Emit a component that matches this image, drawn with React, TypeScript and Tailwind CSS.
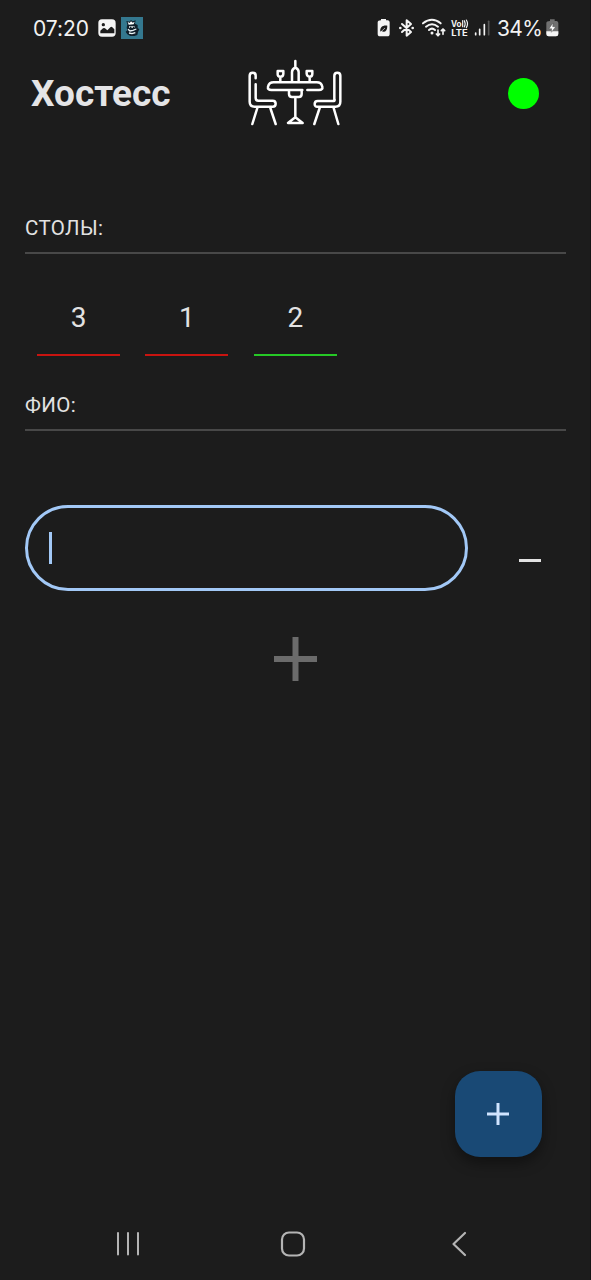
import React from "react";

const stroke = { fill: "none", strokeLinecap: "round", strokeLinejoin: "round" } as const;

function StatusBar() {
  return (
    <div className="flex h-14 w-full items-center justify-between pl-[32px] pr-[31px] text-[#f2f2f2]">
      <div className="flex items-center">
        <span className="w-[66px] whitespace-nowrap pl-px font-['Inter',sans-serif] text-[21px] leading-none tracking-[-0.05px]">07:20</span>
        <svg width="18" height="18" viewBox="0 0 54 54">
          <rect x="1" y="1" width="52" height="52" rx="11" fill="#f4f4f4" />
          <circle cx="16" cy="17" r="5" fill="#1c1c1c" />
          <path d="M7 43V35l8-7q3-2 6 0l7 6 9-9q3-3 6 0l6 6v12z" fill="#1c1c1c" />
        </svg>
        <svg className="ml-[5px]" width="22" height="22" viewBox="0 0 66 66">
          <rect width="66" height="66" fill="#34788f" />
          <path d="M19 22L16 12l9 2 5-5 5 4 9-3-2 10 8 4v9l5 4-4 8-2 9-9 3H28l-9-5-5-8 5-4-2-8z" fill="#101f2b" />
          <path d="M20 15l6 3 4-5 5 4 6-3-3 8-15 1z" fill="#fff" />
          <path d="M24 30h17M21 37l6 5 9-2 10-4M24 48l9 2 10-3" fill="none" stroke="#edf5f8" strokeWidth="4" />
          <path d="M29 29v5M38 29v5" stroke="#101f2b" strokeWidth="4" />
        </svg>
      </div>
      <div className="flex items-center">
        <svg width="120" height="40" viewBox="0 0 360 120">
          <path d="M33 33h15v4h6q5 1 5 6v34q0 8-7 8H30q-7 0-7-8V43q0-6 10-6z" fill="#f4f4f4" />
          <path d="M31 71c-2-14 8-20 21-18 0 16-8 22-18 16z" fill="#1c1c1c" />
          <path d="M31 73l14-13" stroke="#f4f4f4" strokeWidth="2" />
          <path d="M96 48l27 24-13 11V37l13 11-27 24" {...stroke} stroke="#f4f4f4" strokeWidth="6" />
          <g fill="#f4f4f4"><circle cx="91" cy="60" r="4" /><circle cx="128" cy="60" r="4" /></g>
          <g {...stroke} stroke="#f4f4f4" strokeWidth="6">
            <path d="M159 46q27-21 53 0M168 56q18-14 36 0M177 66q9-8 18 0" />
            <path d="M204 66v17m-5-5 5 5 5-5M219 79V63m-5 5 5-5 5 5" strokeWidth="5" />
          </g>
          <circle cx="186" cy="75" r="4.5" fill="#f4f4f4" />
          <text x="243" y="56" textLength="32" lengthAdjust="spacingAndGlyphs" fontFamily="Inter, sans-serif" fontSize="25" fontWeight="700" fill="#f4f4f4">Vo</text>
          <path d="M278 38v18M283 38q5 9 0 19M289 36q7 11 0 23" {...stroke} stroke="#f4f4f4" strokeWidth="3.5" />
          <text x="244" y="83" textLength="49" lengthAdjust="spacingAndGlyphs" fontFamily="Inter, sans-serif" fontSize="25" fontWeight="700" fill="#f4f4f4">LTE</text>
          <g {...stroke} strokeWidth="5" stroke="#f4f4f4">
            <path d="M317 75v5M329 64v16M343 50v30" />
            <path d="M356 40v40" stroke="#555" />
          </g>
        </svg>
        <span className="ml-[7px] w-[48px] whitespace-nowrap font-['Inter',sans-serif] text-[21px] leading-none tracking-[-0.6px]">34%</span>
        <svg width="14" height="18" viewBox="0 0 42 54">
          <path d="M15 1h14v5h6q5 1 5 6v33q0 7-7 7H11q-7 0-7-7V12q0-6 11-6z" fill="#707070" />
          <path d="M4 37h36v8q0 7-7 7H11q-7 0-7-7z" fill="#f5f5f5" />
          <path d="M24 12L12 29h8l-1 11 13-17h-9z" fill="#fff" stroke="#333" strokeWidth="1" />
        </svg>
      </div>
    </div>
  );
}

function DiningTable() {
  return (
    <svg width="110" height="80" viewBox="0 0 330 240">
      <g {...stroke} stroke="#fff" strokeWidth="7.5">
        <path d="M47 79V71q0-9-9-9t-9 9v78q0 15 15 15h54q9 0 9-9t-9-9H55q-8 0-8-8V97" />
        <path d="M284 143q0 4-5 4h-46q-9 0-9 9t9 8h53q15 0 15-15V71q0-9-9-9t-9 9v72" />
        <path d="M52 168L37 216M91 168l16 48M239 168l-16 48M281 168l14 48" />
        <path d="M187 114H94q-12 0-10-10 3-13 17-13h129q14 0 17 13 2 10-10 10h-35" />
        <path d="M147 117v9q0 9 9 9h20q9 0 9-9v-9M166 137v59M166 196l-22 17h44z" />
        <path d="M156 89V60q0-8 10-14 10 6 10 14v29M166 43V27" />
        <path d="M113 57h17v8q0 9-9 9t-8-9zM121 75v14M200 57h17v8q0 9-8 9t-9-9zM209 75v14" />
      </g>
    </svg>
  );
}

function SectionTitle({ children }: { children: React.ReactNode }) {
  return (
    <div className="mx-[25px] h-[38px] w-[541px] border-b-2 border-[#484848] text-[20.5px] leading-[24px] tracking-[0.4px] text-[#e2e2e2]">
      {children}
    </div>
  );
}

const tables = [
  { id: 3, line: "border-[#c81410]" },
  { id: 1, line: "border-[#c81410]" },
  { id: 2, line: "border-[#26c826]" },
];

export default function App() {
  return (
    <div className="flex h-[1280px] w-[591px] flex-col overflow-hidden border-r border-[#141414] bg-[#1c1c1c] font-['Roboto',sans-serif]">
      <StatusBar />
      <header className="-mt-1 flex h-[80px] w-[591px] items-center">
        <h1 className="w-[240px] pl-[31px] pt-[3px] text-[37px] font-bold leading-none text-[#e4e4e6]">Хостесс</h1>
        <DiningTable />
        <span className="ml-[158px] mt-[3px] size-[31px] rounded-full bg-[#00ff00]" />
      </header>

      <main className="flex grow flex-col pt-[84px]">
        <SectionTitle>СТОЛЫ:</SectionTitle>
        <div className="flex h-[139px] gap-[25.4px] pl-[37px] pt-[46px]">
          {tables.map((t) => (
            <div key={t.id} className={`h-[56px] w-[83px] shrink-0 border-b-2 text-center text-[28px] leading-[36px] text-[#e2e2e2] ${t.line}`}>
              {t.id}
            </div>
          ))}
        </div>
        <SectionTitle>ФИО:</SectionTitle>
        <div className="mt-[74px] flex h-[86px] pl-[25px]">
          <div className="flex h-[86px] w-[443px] items-center rounded-full border-[3px] border-[#a2c8f6] pl-[21px]">
            <span className="h-8 w-[3px] bg-[#a2c8f6]" />
          </div>
          <span className="ml-[50.5px] mt-[54px] h-[3px] w-[22px] bg-[#e2e2e2]" />
        </div>
        <svg className="ml-[273px] mt-[46px]" width="45" height="44" viewBox="0 0 45 44">
          <path d="M1 22h43M22.5 0v44" stroke="#6b6b6b" strokeWidth="6" />
        </svg>
        <button className="mb-[51px] ml-[455px] mt-auto flex h-[86px] w-[87px] items-center justify-center rounded-[25px] bg-[#194975] shadow-[0_6px_14px_rgba(0,0,0,0.4)]">
          <svg className="-ml-px" width="24" height="24" viewBox="0 0 24 24">
            <path d="M1 12h22M12 1v22" stroke="#d0e4ff" strokeWidth="3" />
          </svg>
        </button>
      </main>

      <nav className="flex h-[72px] w-[591px] shrink-0 items-center pl-[116px]">
        <svg width="24" height="26" viewBox="0 0 24 26">
          <path d="M2 2v21.5M12 2v21.5M22 2v21.5" {...stroke} stroke="#b4b4b4" strokeWidth="2" />
        </svg>
        <svg className="ml-[140px]" width="26" height="26" viewBox="0 0 26 26">
          <rect x="2" y="1.5" width="22" height="23" rx="7" fill="none" stroke="#b4b4b4" strokeWidth="2.2" />
        </svg>
        <svg className="ml-[145px]" width="17" height="26" viewBox="0 0 17 26">
          <path d="M14 2L2.5 13 14 24" {...stroke} stroke="#b4b4b4" strokeWidth="2.2" />
        </svg>
      </nav>
    </div>
  );
}
